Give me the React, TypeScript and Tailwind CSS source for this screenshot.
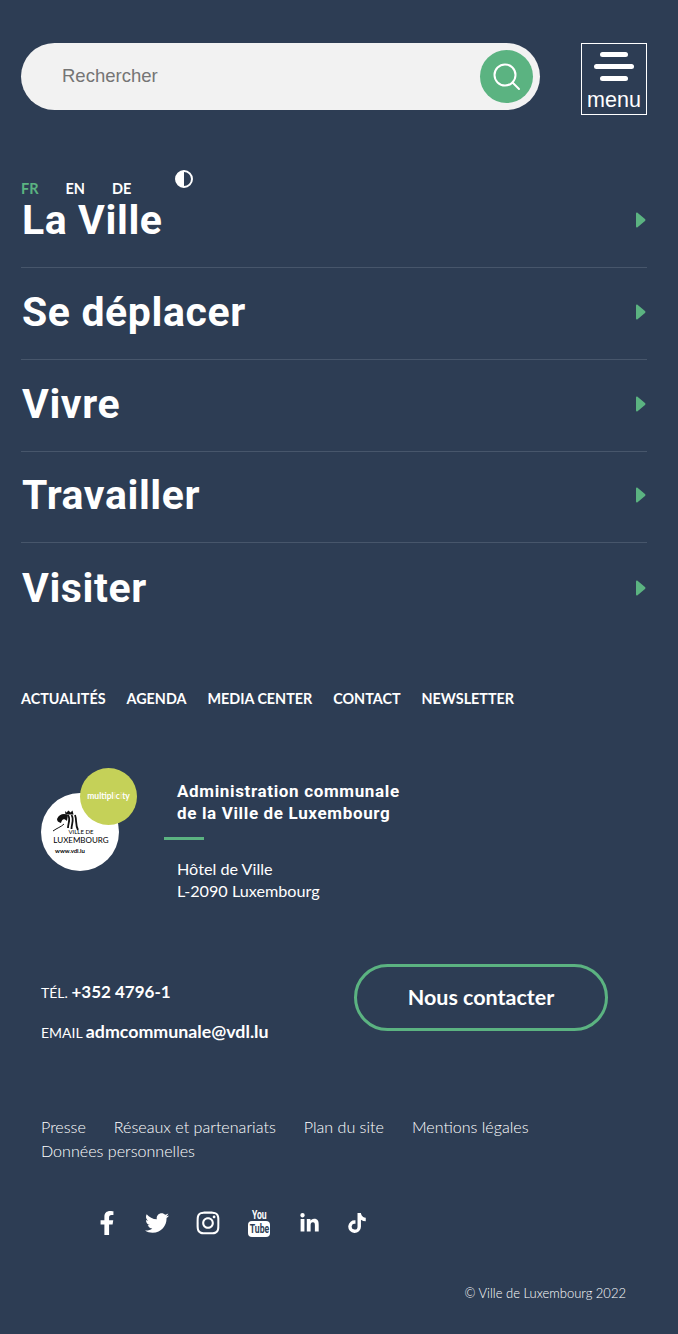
import { FaFacebookF, FaInstagram, FaLinkedinIn, FaTiktok, FaTwitter } from "react-icons/fa";

const din = "font-['Roboto',sans-serif]";
const body = "font-['Lato',sans-serif]";

const menuItems = ["La Ville", "Se déplacer", "Vivre", "Travailler", "Visiter"];
const topLinks = ["ACTUALITÉS", "AGENDA", "MEDIA CENTER", "CONTACT", "NEWSLETTER"];

function Logo() {
  return (
    <div className="relative ml-[41px] mt-[25px] h-[78px] w-[78px] shrink-0 rounded-full bg-white">
      {/* lion */}
      <svg viewBox="0 0 28 22" className="absolute left-[12px] top-[17px] h-[22px] w-[28px]" fill="none" stroke="#111">
        <path d="M12 1l1.500 1.500L15.500 .5l2 2 2-2 1 4h-8z" fill="#111" stroke="none" />
        <path d="M4 9C6 4 11 3 15 5l-1 6C11 8 9 9 8 13 5 12 4 11 4 9z" fill="#111" stroke="none" />
        <path d="M0 21c4-3 8-4 11-7" strokeWidth="1" />
        <path d="M15 5c3 4 0 8 0 13M18.500 5c3 4 0 9 0 14M22 5c2 5 0 9 3 15" strokeWidth="1.800" />
      </svg>
      <div className={`absolute left-0 top-[35px] w-full text-center text-black ${body}`}>
        <div className="ml-[2px] text-[6px] leading-[7px]">VILLE DE</div>
        <div className="ml-[2px] text-[8px] leading-[10px]">LUXEMBOURG</div>
        <div className="mt-[3px] pr-[20px] text-[6px] font-bold leading-[6px]">www.vdl.lu</div>
      </div>
      <div className="absolute left-[39px] top-[-25px] flex h-[57px] w-[57px] items-center justify-center rounded-full bg-[#c5d158]">
        <span className={`text-[8.5px] font-bold text-white ${body}`}>
          mult<span className="text-[#e4dc8c]">i</span>pl<span className="text-[#e4dc8c]">i</span>c<span className="text-[#e4dc8c]">i</span>ty
        </span>
      </div>
    </div>
  );
}

function YoutubeStack() {
  return (
    <div className={`flex h-[28px] w-[22px] flex-col items-center font-bold ${din}`}>
      <span className="h-[12px] scale-x-[0.72] whitespace-nowrap text-[12px] leading-[12px]">You</span>
      <span className="flex h-[16px] w-[22px] items-center justify-center rounded-[4px] bg-white">
        <span className="scale-x-[0.72] whitespace-nowrap text-[12px] leading-[16px] text-[#2d3d54]">Tube</span>
      </span>
    </div>
  );
}

export default function App() {
  return (
    <div className={`h-[1334px] w-[678px] overflow-hidden bg-[#2d3d54] text-white ${body}`}>
      <div className="flex items-start justify-between pl-[21px] pr-[31px] pt-[43px]">
        <div className="flex h-[67px] w-[519px] items-center justify-between rounded-full bg-[#f2f2f2] pl-[41px] pr-[7px]">
          <span className="mt-[-2px] font-['Liberation_Sans',sans-serif] text-[18.5px] text-[#757575]">Rechercher</span>
          <div className="flex h-[53px] w-[53px] items-center justify-center rounded-full bg-[#5bb381]">
            <svg viewBox="0 0 32 32" className="h-[32px] w-[32px]" fill="none" stroke="#fff" strokeWidth="2">
              <circle cx="14" cy="14" r="10.500" />
              <path d="M21.500 21.500 28 28" strokeLinecap="round" />
            </svg>
          </div>
        </div>
        <div className="flex h-[72px] w-[66px] flex-col items-center border border-white pt-[8px]">
          <div className="h-[5px] w-[28px] rounded-full bg-white" />
          <div className="mt-[7px] h-[5px] w-[40px] rounded-full bg-white" />
          <div className="mt-[7px] h-[5px] w-[28px] rounded-full bg-white" />
          <span className="mt-[7px] font-['Liberation_Sans',sans-serif] text-[21.5px] leading-[24px]">menu</span>
        </div>
      </div>

      <div className={`relative ml-[21px] mt-[65px] flex h-[18px] items-center gap-[27px] text-[14.5px] font-bold leading-[18px] ${body}`}>
        <span className="text-[#5bb381]">FR</span>
        <span>EN</span>
        <span>DE</span>
        <svg viewBox="0 0 20 20" className="absolute left-[153px] top-[-11px] h-[20px] w-[20px]">
          <circle cx="10" cy="10" r="8" fill="none" stroke="#fff" strokeWidth="2" />
          <path d="M10 2a8 8 0 0 0 0 16z" fill="#fff" />
        </svg>
      </div>

      <ul className="ml-[21px] mr-[31px] mt-[-21.750px]">
        {menuItems.map((item) => (
          <li
            key={item}
            className="flex h-[91.750px] items-center justify-between border-b border-[#47566b] pb-[1.500px] last:border-b-0"
          >
            <span className={`ml-[1px] text-[41px] font-bold tracking-[0.6px] ${din}`}>{item}</span>
            <svg viewBox="0 0 11 16" className="mb-[1.500px] mr-[1px] h-[16px] w-[11px]">
              <path d="M1 1.500c0-1 .8-1.300 1.500-.8l7.500 6.400c.6.5.6 1.300 0 1.800l-7.500 6.400c-.7.5-1.500.2-1.500-.8z" fill="#5bb381" />
            </svg>
          </li>
        ))}
      </ul>

      <div className="ml-[21px] mt-[55px] flex gap-[21px] text-[14.35px] font-bold leading-[18px]">
        {topLinks.map((link) => (
          <span key={link}>{link}</span>
        ))}
      </div>

      <div className="mt-[60px] flex">
        <Logo />
        <div className="ml-[58px]">
          <div className={`pt-[12px] text-[17px] font-bold leading-[22px] tracking-[0.65px] ${din}`}>
            Administration communale
            <br />
            de la Ville de Luxembourg
          </div>
          <div className="ml-[-13px] mt-[13px] h-[3px] w-[40px] bg-[#5bb381]" />
          <div className="mt-[18px] text-[16.2px] leading-[22px]">
            Hôtel de Ville
            <br />
            L-2090 Luxembourg
          </div>
        </div>
      </div>

      <div className="ml-[41px] mt-[62px] flex items-start justify-between pr-[70px]">
        <div className="pt-[16px] text-[14px]">
          <div className="h-[24px] leading-[24px]">
            TÉL. <span className="text-[17px] font-bold">+352 4796-1</span>
          </div>
          <div className="mt-[15px] h-[24px] leading-[24px]">
            EMAIL <span className="text-[17.8px] font-bold">admcommunale@vdl.lu</span>
          </div>
        </div>
        <div className="flex h-[67px] w-[254px] items-center justify-center rounded-full border-[3px] border-[#5bb381] text-[21.5px] font-bold">
          Nous contacter
        </div>
      </div>

      <div className="ml-[41px] mt-[72px] flex w-[560px] flex-wrap gap-x-[28px] text-[16.1px] font-light leading-[24px] text-white">
        <span>Presse</span>
        <span>Réseaux et partenariats</span>
        <span>Plan du site</span>
        <span>Mentions légales</span>
        <span>Données personnelles</span>
      </div>

      <div className="ml-[99px] mt-[46px] flex h-[28px] items-center">
        <FaFacebookF className="h-[24px] w-[16px]" />
        <FaTwitter className="ml-[30px] h-[24px] w-[24px]" />
        <FaInstagram className="ml-[27px] h-[26px] w-[24px]" />
        <div className="ml-[28px]">
          <YoutubeStack />
        </div>
        <FaLinkedinIn className="ml-[29px] h-[21px] w-[21px]" />
        <FaTiktok className="ml-[28px] h-[20px] w-[18px]" />
      </div>

      <div className="mr-[52px] mt-[47px] text-right text-[13px] font-light leading-[18px]">© Ville de Luxembourg 2022</div>
    </div>
  );
}
